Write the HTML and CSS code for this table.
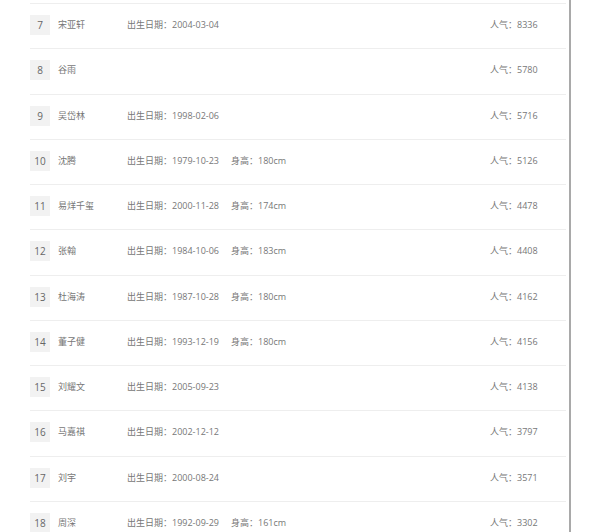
FILE: index.html
```html
<!DOCTYPE html>
<html lang="zh-CN">
<head>
<meta charset="utf-8">
<title>人气榜</title>
<link rel="stylesheet" href="styles.css">
</head>
<body>
<div class="page">
  <ul class="rank-list">
    <li class="row"><span class="num">7</span><span class="name">宋亚轩</span><span class="birth">出生日期<i class="colon">：</i>2004-03-04</span><span class="height"></span><span class="pop">人气<i class="colon">：</i>8336</span></li>
    <li class="row"><span class="num">8</span><span class="name">谷雨</span><span class="birth"></span><span class="height"></span><span class="pop">人气<i class="colon">：</i>5780</span></li>
    <li class="row"><span class="num">9</span><span class="name">吴岱林</span><span class="birth">出生日期<i class="colon">：</i>1998-02-06</span><span class="height"></span><span class="pop">人气<i class="colon">：</i>5716</span></li>
    <li class="row"><span class="num">10</span><span class="name">沈腾</span><span class="birth">出生日期<i class="colon">：</i>1979-10-23</span><span class="height">身高<i class="colon">：</i>180cm</span><span class="pop">人气<i class="colon">：</i>5126</span></li>
    <li class="row"><span class="num">11</span><span class="name">易烊千玺</span><span class="birth">出生日期<i class="colon">：</i>2000-11-28</span><span class="height">身高<i class="colon">：</i>174cm</span><span class="pop">人气<i class="colon">：</i>4478</span></li>
    <li class="row"><span class="num">12</span><span class="name">张翰</span><span class="birth">出生日期<i class="colon">：</i>1984-10-06</span><span class="height">身高<i class="colon">：</i>183cm</span><span class="pop">人气<i class="colon">：</i>4408</span></li>
    <li class="row"><span class="num">13</span><span class="name">杜海涛</span><span class="birth">出生日期<i class="colon">：</i>1987-10-28</span><span class="height">身高<i class="colon">：</i>180cm</span><span class="pop">人气<i class="colon">：</i>4162</span></li>
    <li class="row"><span class="num">14</span><span class="name">董子健</span><span class="birth">出生日期<i class="colon">：</i>1993-12-19</span><span class="height">身高<i class="colon">：</i>180cm</span><span class="pop">人气<i class="colon">：</i>4156</span></li>
    <li class="row"><span class="num">15</span><span class="name">刘耀文</span><span class="birth">出生日期<i class="colon">：</i>2005-09-23</span><span class="height"></span><span class="pop">人气<i class="colon">：</i>4138</span></li>
    <li class="row"><span class="num">16</span><span class="name">马嘉祺</span><span class="birth">出生日期<i class="colon">：</i>2002-12-12</span><span class="height"></span><span class="pop">人气<i class="colon">：</i>3797</span></li>
    <li class="row"><span class="num">17</span><span class="name">刘宇</span><span class="birth">出生日期<i class="colon">：</i>2000-08-24</span><span class="height"></span><span class="pop">人气<i class="colon">：</i>3571</span></li>
    <li class="row"><span class="num">18</span><span class="name">周深</span><span class="birth">出生日期<i class="colon">：</i>1992-09-29</span><span class="height">身高<i class="colon">：</i>161cm</span><span class="pop">人气<i class="colon">：</i>3302</span></li>
  </ul>
</div>
</body>
</html>
```

FILE: styles.css
```css
html, body {
  margin: 0;
  padding: 0;
  height: 100%;
  overflow: hidden;
  background: #fff;
}

.page {
  box-sizing: border-box;
  width: 571px;
  min-height: 100%;
  padding: 3px 3px 0 30px;
  border-right: 2px solid #a9a9a9;
  font-family: "Open Sans", "Noto Sans CJK SC", sans-serif;
  font-size: 9px;
  color: #777;
}

.rank-list {
  list-style: none;
  margin: 0;
  padding: 0;
  border-top: 1px solid #eeeeee;
}

.row {
  box-sizing: border-box;
  height: 45.27px;
  padding-top: 11px;
  display: grid;
  grid-template-columns: 28px 69px 104px 1fr 76px;
  align-items: start;
  border-bottom: 1px solid #eeeeee;
}

.row > span {
  line-height: 20px;
  white-space: nowrap;
}

.colon {
  font-style: normal;
  font-family: "Noto Sans CJK TC", sans-serif;
}

.num {
  width: 20px;
  height: 20px;
  background: #f2f2f2;
  text-align: center;
  font-size: 10px;
  color: #666;
}
```
